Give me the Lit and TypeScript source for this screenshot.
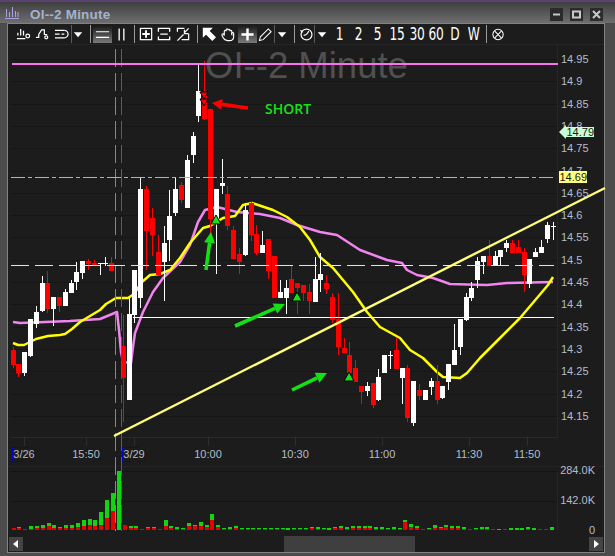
import { LitElement, html, svg, css } from "lit";
import { customElement } from "lit/decorators.js";

// x, wick top, body top, body bottom, wick bottom, 1 = white / 0 = red
const CANDLES: number[][] = [
  [13, 347, 350, 365, 368, 0], [18, 364, 364, 373, 377, 0], [24, 352, 352, 373, 376, 1], [30, 319, 319, 356, 357, 1],
  [36, 306, 312, 324, 328, 1], [42, 276, 283, 311, 312, 1], [47, 271, 283, 309, 313, 0], [53, 297, 297, 309, 326, 1],
  [59, 297, 297, 306, 312, 0], [65, 289, 292, 306, 306, 1], [71, 280, 283, 293, 293, 1], [76, 262, 272, 282, 290, 1],
  [82, 261, 261, 273, 279, 1], [88, 259, 261, 264, 270, 0], [94, 260, 263, 265, 266, 0], [100, 263, 263, 264, 275, 1],
  [105, 257, 263, 264, 266, 1], [111, 257, 263, 271, 271, 0], [123, 315, 346, 378, 422, 0], [129, 298, 314, 400, 400, 1],
  [134, 270, 270, 315, 323, 1], [140, 177, 189, 298, 308, 1], [146, 186, 189, 231, 270, 0], [152, 208, 218, 235, 256, 0],
  [158, 235, 252, 275, 276, 0], [164, 226, 243, 262, 301, 1], [169, 190, 216, 240, 261, 1], [175, 178, 189, 213, 216, 1],
  [181, 182, 185, 200, 203, 0], [187, 155, 160, 208, 208, 1], [193, 132, 136, 155, 163, 1], [198, 65, 91, 116, 122, 1],
  [204, 61, 92, 119, 120, 0], [210, 109, 109, 219, 240, 0], [216, 189, 189, 219, 274, 1], [222, 159, 183, 186, 194, 1],
  [227, 186, 194, 226, 230, 0], [233, 226, 230, 259, 259, 0], [239, 248, 254, 262, 274, 0], [245, 203, 210, 255, 256, 1],
  [251, 202, 203, 235, 241, 0], [256, 225, 234, 253, 255, 0], [262, 231, 245, 253, 253, 1], [268, 239, 239, 271, 279, 0],
  [274, 256, 256, 298, 298, 0], [280, 280, 292, 298, 298, 1], [286, 280, 288, 298, 314, 1], [291, 266, 279, 293, 293, 0],
  [297, 283, 283, 288, 314, 0], [303, 285, 285, 293, 301, 0], [309, 284, 292, 301, 314, 0], [315, 257, 279, 302, 302, 1],
  [320, 253, 274, 280, 292, 1], [326, 275, 283, 289, 294, 0], [332, 293, 297, 320, 323, 0], [338, 293, 319, 347, 355, 0],
  [344, 338, 348, 353, 353, 0], [349, 342, 355, 373, 373, 0], [355, 360, 368, 382, 382, 0], [361, 386, 386, 392, 404, 0],
  [367, 382, 386, 391, 396, 1], [373, 383, 383, 405, 408, 0], [378, 369, 377, 400, 401, 1], [384, 355, 355, 373, 373, 1],
  [390, 351, 355, 356, 369, 1], [396, 338, 350, 369, 369, 0], [402, 368, 368, 378, 404, 1], [407, 365, 368, 418, 422, 0],
  [413, 381, 381, 423, 426, 1], [419, 384, 390, 396, 400, 0], [425, 390, 390, 400, 400, 1], [431, 378, 381, 387, 395, 1],
  [437, 365, 381, 400, 404, 0], [442, 386, 386, 398, 399, 1], [448, 364, 364, 382, 390, 1], [454, 324, 350, 365, 365, 1],
  [460, 319, 319, 347, 355, 1], [466, 293, 297, 320, 321, 1], [471, 282, 288, 298, 301, 1], [477, 257, 261, 280, 288, 1],
  [483, 256, 256, 262, 274, 1], [489, 240, 256, 266, 266, 0], [495, 251, 256, 265, 265, 1], [500, 250, 250, 257, 265, 1],
  [506, 240, 243, 248, 252, 1], [512, 240, 243, 253, 253, 0], [518, 240, 247, 253, 253, 0], [524, 248, 252, 275, 292, 0],
  [529, 259, 259, 284, 288, 1], [535, 248, 252, 257, 257, 1], [541, 240, 247, 253, 253, 1], [547, 222, 225, 239, 243, 1],
  [553, 222, 226, 227, 240, 1],
];

// red part, green part, one pair per bar
const VOLUME: number[][] = [
  [2, 0], [2, 1], [1, 0], [1, 3], [2, 2], [2, 3], [4, 3], [2, 3], [2, 1], [2, 3], [2, 3], [3, 4], [4, 6], [5, 6], [4, 6],
  [5, 13], [12, 18], [19, 18], [0, 59], [5, 0], [2, 2], [2, 2], [1, 0], [2, 1], [2, 1], [1, 0], [4, 6], [2, 2], [1, 2],
  [1, 1], [4, 3], [4, 1], [4, 4], [3, 2], [10, 6], [3, 2], [1, 1], [1, 2], [2, 2], [1, 1], [1, 1], [1, 1], [1, 1], [1, 1],
  [1, 1], [1, 1], [1, 1], [0, 2], [1, 1], [1, 1], [1, 1], [2, 1], [1, 2], [1, 1], [0, 2], [2, 1], [2, 2], [1, 2], [2, 2],
  [2, 2], [2, 2], [2, 2], [1, 2], [1, 2], [1, 1], [1, 2], [1, 1], [8, 2], [3, 3], [2, 2], [1, 0], [1, 1], [2, 3], [2, 1],
  [3, 2], [2, 2], [2, 2], [1, 2], [1, 0], [1, 1], [1, 2], [1, 2], [1, 0], [0, 1], [1, 0], [0, 2], [0, 2], [0, 2], [1, 2],
  [0, 2], [1, 0], [1, 0], [0, 3],
];

const YELLOW = "13,343 18,345 24,345 30,342 36,339 48,336 60,335 65,334 72,329 80,322 90,316 100,310 106,304 116,298 128,298 134,294 142,282 150,275 160,274 170,270 180,258 190,243 203,228 210,226 223,218 235,216 243,205 252,203 273,210 287,217 300,227 310,240 320,257 333,268 353,292 367,312 380,327 400,338 410,350 423,358 437,372 443,377 460,378 467,373 480,358 500,338 520,318 537,298 548,285 553,277";
const PINK = "13,322 20,323 70,321 100,319 117,312 119,330 121,352 123,362 131,363 133,347 135,333 143,312 153,292 163,278 180,262 190,245 198,222 205,210 217,207 237,212 260,214 280,218 297,225 320,232 337,235 360,250 387,260 402,263 407,270 417,275 433,278 450,284 487,285 507,283 553,282";

const PRICES = ["14.95", "14.9", "14.85", "14.8", "14.75", "14.7", "14.65", "14.6", "14.55", "14.5", "14.45", "14.4", "14.35", "14.3", "14.25", "14.2", "14.15"];
const TIMES: [number, string][] = [[24, "3/26"], [86, "15:50"], [134, "3/29"], [208, "10:00"], [295, "10:30"], [382, "11:00"], [469, "11:30"], [527, "11:50"]];

const priceY = (i: number) => 59 + i * 22.3;

const ICONS: Record<string, unknown> = {
  bars: svg`<path d="M2 9V6M5 9V2M8 9V4M1 12.5H10" /><circle cx="12.5" cy="9.5" r="2" />`,
  step: svg`<path d="M1 11H4V8L7 3H10V8H13" /><circle cx="12" cy="11" r="1.6" />`,
  list: svg`<path d="M1 3.5H11M1 7.5H6M1 11.5H11M8 7.5H11" /><path d="M11 3.5A4 4 0 0 1 11 11.5" />`,
  plus: svg`<rect x="1.5" y="1.5" width="12" height="12" /><path d="M7.5 3.5V11.5M3.5 7.5H11.5" stroke-width="2" />`,
  minus: svg`<path d="M1.5 5V1.5H13.5V5M1.5 10V13.5H13.5V10M3.5 7.5H11.5" stroke-width="1.4" />`,
  fit: svg`<path d="M1.5 5V1.5H9M13.5 7V13.5H6M1.5 14.5L8 8M13.5 1.5L8.5 6.5M9 3V7H13" />`,
  arrow: svg`<path d="M1.5 1.5H10L7.2 4.3L14 11L11 14L4.3 7.2L1.5 10Z" fill="#fff" />`,
  hand: svg`<path d="M3.5 9V4.5A1 1 0 0 1 5.5 4.5V3A1 1 0 0 1 7.5 3V3.5A1 1 0 0 1 9.5 3.5V4.5A1 1 0 0 1 11.5 4.5V8A1 1 0 0 1 13.5 6.5V10C13.5 13 11.5 14.5 9 14.5H7C4.5 14.5 3 13 2 11L1 8.5A1 1 0 0 1 3 8Z" stroke-width="1.2" />`,
  cross: svg`<path d="M8 1.5V14.5M1.5 8H14.5" stroke-width="2.6" />`,
  pencil: svg`<path d="M1.5 14.5L2.5 10.5L11 2L14 5L5.5 13.5Z" stroke-width="1.1" />`,
  clock: svg`<circle cx="8" cy="8" r="5.8" /><path d="M1.5 3.5L4 5.5M8 8L10.5 4.5M8 8L5 9" />`,
  off: svg`<circle cx="7.5" cy="8" r="5.5" stroke-width="1.1" /><path d="M4 4.5L11 11.5M11 4.5L4 11.5" stroke-width="1.1" />`,
  drop: svg`<path d="M3 5.5H12L7.5 11Z" fill="#fff" stroke="none" />`,
  hline: svg`<path d="M1 5H15M1 11H15" stroke-width="1.2" />`,
  vline: svg`<path d="M5.5 1.5V14.5M10.5 1.5V14.5" stroke-width="1.4" />`,
};

const icon = (name: string) => html`<svg class="icon" viewBox="0 0 16 16">${ICONS[name]}</svg>`;

const arrow = (x1: number, y1: number, x2: number, y2: number, color: string, head = 11) => {
  const a = Math.atan2(y2 - y1, x2 - x1);
  const bx = x2 - Math.cos(a) * head;
  const by = y2 - Math.sin(a) * head;
  const nx = -Math.sin(a);
  const ny = Math.cos(a);
  return svg`
    <line x1=${x1} y1=${y1} x2=${bx} y2=${by} stroke=${color} stroke-width="3.6" />
    <polygon fill=${color} points="${x2},${y2} ${bx + nx * 5.5},${by + ny * 5.5} ${bx - nx * 5.5},${by - ny * 5.5}" />`;
};

const marker = (x: number, y: number) =>
  svg`<polygon fill="#14e014" stroke="#000" points="${x},${y - 5} ${x + 5},${y + 4} ${x - 5},${y + 4}" />`;

const dropMark = (x: number, y: number) =>
  svg`<polygon fill="#f00" stroke="#000" points="${x - 4},${y - 3} ${x + 4},${y - 3} ${x},${y + 4}" />`;

@customElement("app-root")
export class AppRoot extends LitElement {
  static styles = css`
    :host {
      display: flex;
      flex-direction: column;
      width: 615px;
      height: 556px;
      background: #4c4c4c;
      overflow: hidden;
      font-family: "Liberation Sans", Arial, sans-serif;
    }
    .title {
      flex: none;
      box-sizing: border-box;
      height: 23px;
      display: flex;
      align-items: center;
      gap: 7px;
      padding: 2px 12px 0 5px;
      border-top: 2px solid #5b4273;
      background: linear-gradient(#3f3f3f, #6e6e6e);
    }
    .title-icon {
      width: 14px;
      height: 13px;
      fill: none;
      stroke: #a9a2e0;
      margin: -3px 4px 0 0;
    }
    .title-text {
      font-size: 13.5px;
      font-weight: bold;
      color: #a3b3cc;
      flex: 1;
      margin-top: 2px;
      letter-spacing: 0.2px;
    }
    .winbtn {
      width: 13px;
      height: 13px;
      background: #2b2b2b;
      fill: none;
      stroke: #c9c9c9;
      stroke-width: 2;
      margin-top: 1px;
    }
    .panel {
      flex: none;
      box-sizing: border-box;
      height: 530px;
      margin: 0 10px 0 7px;
      border: 1px solid #828282;
      background: #1c1c1c;
      display: flex;
      flex-direction: column;
    }
    .toolbar {
      flex: none;
      height: 21px;
      box-sizing: border-box;
      padding-left: 6px;
      display: grid;
      grid-template-columns:
        18px 20px 19px 1px 13px 8px 19px 19px 6px 18px 19px 19px 8px 17px 20px 19px 16px 2px 14px 10px 14px 2px 15px
        19px 19px 19px 20px 19px 19px 19px 19px 9px 12px;
      align-items: center;
      justify-items: center;
      border-bottom: 1px solid #262626;
    }
    .tool {
      align-self: stretch;
      justify-self: stretch;
      display: flex;
      align-items: center;
      justify-content: center;
      overflow: hidden;
    }
    .tool.on {
      margin: 2px 0 1px;
      background: linear-gradient(#1c1c1c, #7a7a7a);
    }
    .icon {
      flex: none;
      width: 15px;
      height: 15px;
      fill: none;
      stroke: #fff;
      stroke-width: 1.3;
    }
    .sep {
      justify-self: start;
      width: 1px;
      height: 18px;
      background: #9a9a9a;
    }
    .sep.dim {
      background: #5a5a5a;
    }
    .sep.s1 {
      margin-left: 1px;
    }
    .sep.s3 {
      margin-left: 3px;
    }
    .sep.s4 {
      margin-left: 4px;
    }
    .sep.s5 {
      margin-left: 5px;
    }
    .num {
      color: #fff;
      font-family: "DejaVu Sans", sans-serif;
      font-size: 18px;
      font-weight: 400;
      line-height: 20px;
      transform: scaleX(0.68);
      white-space: nowrap;
      letter-spacing: -0.5px;
    }
    .chart {
      display: block;
      flex: none;
      width: 596px;
      height: 490px;
      overflow: visible;
    }
    .chart text {
      font-family: "Liberation Sans", Arial, sans-serif;
    }
    .axis {
      font-size: 11px;
      fill: #b4bccb;
    }
    .watermark {
      font-size: 36.5px;
      fill: #505050;
    }
    .tag {
      font-size: 11px;
      fill: #14210f;
    }
    .chart .short {
      font-family: "Open Sans", sans-serif;
      font-size: 14px;
      font-weight: 600;
      fill: #18e018;
    }
    .scroll {
      flex: 1;
      display: flex;
      align-items: stretch;
      justify-content: space-between;
      padding: 1px 0 0 1px;
      position: relative;
    }
    .scroll-btn {
      width: 14px;
      height: 14px;
      background: #444;
      display: flex;
      align-items: center;
      justify-content: center;
      margin: 1px 1px 1px 0;
    }
    .scroll-btn svg {
      width: 6px;
      height: 8px;
      fill: #fff;
    }
    .thumb {
      position: absolute;
      left: 276px;
      top: 1px;
      width: 131px;
      bottom: 0;
      background: #3f3f3f;
    }
  `;

  private tool(name: string, on = false) {
    return html`<div class="tool ${on ? "on" : ""}">${icon(name)}</div>`;
  }

  private chart() {
    return svg`
      <g shape-rendering="crispEdges">
        ${PRICES.map((_, i) => svg`<rect x="11" y=${Math.round(priceY(i))} width="547" height="1" fill="#161616" />`)}
        <rect x="557" y="45" width="1" height="392" fill="#262626" />
        <rect x="11" y="437" width="547" height="1" fill="#2a2a2a" />
        <rect x="8" y="466" width="596" height="1" fill="#242424" />
        <rect x="11" y="471" width="546" height="1" fill="#141414" />
        <rect x="11" y="501" width="546" height="1" fill="#141414" />
        <rect x="557" y="471" width="1" height="60" fill="#262626" />
        ${TIMES.map(([x]) => svg`<rect x=${x} y="437" width="1" height="9" fill="#2e2e2e" />`)}
      </g>
      <text class="watermark" x="306.5" y="78" text-anchor="middle">OI--2 Minute</text>

      <polyline points=${PINK} fill="none" stroke="#f284f0" stroke-width="2.5" stroke-linejoin="round" />
      <polyline points=${YELLOW} fill="none" stroke="#ffff00" stroke-width="2.5" stroke-linejoin="round" />

      <g shape-rendering="crispEdges">
        ${CANDLES.map(([x, wt, bt, bb, wb, up]) => {
          const c = up ? "#fff" : "#f00";
          return svg`<rect x=${x} y=${wt} width="1" height=${wb - wt} fill=${c} /><rect x=${x - 2} y=${bt} width="5" height=${Math.max(bb - bt, 1)} fill=${c} />`;
        })}
        <line x1="115.5" x2="115.5" y1="49" y2="531" stroke="#1eb4bb" stroke-dasharray="18 6" />
        <line x1="121.5" x2="121.5" y1="49" y2="531" stroke="#16797f" stroke-dasharray="18 6" />
        <rect x="12" y="63" width="546" height="2" fill="#fa72ee" />
        <line x1="11" x2="554" y1="177.5" y2="177.5" stroke="#ee88ee" stroke-dasharray="14 3 4 3" />
        <line x1="11" x2="554" y1="265.5" y2="265.5" stroke="#e2e2e2" stroke-dasharray="18 6" />
        <rect x="133" y="317" width="421" height="1" fill="#fff" />
      </g>

      <line x1="114" y1="436" x2="605" y2="188" stroke="#ffff78" stroke-width="2.4" />

      ${arrow(206, 270, 211, 232, "#14e014")}
      ${arrow(235, 326, 285, 304, "#14e014")}
      ${arrow(292, 390, 327, 373, "#14e014")}
      ${arrow(248, 108, 212, 103, "#f00", 10)}
      ${marker(216, 220)}
      ${marker(297, 297)}
      ${marker(349, 377)}
      ${dropMark(204, 95)}
      ${dropMark(204, 102)}
      <text class="short" x="265" y="114">SHORT</text>

      ${PRICES.map((p, i) => svg`<text class="axis" x="561" y=${priceY(i) + 4}>${p}</text>`)}
      <polygon fill="#c6ffd8" points="559,132 566,125 566,127 594,127 594,137 566,137 566,139" />
      <text class="tag" x="566.5" y="136">14.79</text>
      <rect x="559" y="171" width="28" height="12" fill="#ffff80" />
      <text class="tag" x="559.5" y="181">14.69</text>

      ${TIMES.map(([x, t]) => svg`<text class="axis" x=${x} y="458" text-anchor="middle">${t}</text>`)}
      <path d="M28.5 447.5H12.5V461.5H20M28 461.5H35.5V448" fill="none" stroke="#0000c8" shape-rendering="crispEdges" />
      <path d="M138.5 447.5H122.5V461.5H130M138 461.5H145.5V448" fill="none" stroke="#0000c8" shape-rendering="crispEdges" />

      <g shape-rendering="crispEdges">
        ${VOLUME.map(([r, g], i) => {
          const x = Math.round(11.5 + i * 5.85);
          return svg`<rect x=${x} y=${530 - r} width="4" height=${r} fill="#e60000" /><rect x=${x} y=${530 - r - g} width="4" height=${g} fill="#0fd60f" />`;
        })}
      </g>
      <text class="axis" x="595" y="474" text-anchor="end">284.0K</text>
      <text class="axis" x="595" y="504" text-anchor="end">142.0K</text>
      <text class="axis" x="595" y="533.5" text-anchor="end">0</text>
    `;
  }

  render() {
    return html`
      <div class="title">
        <svg class="title-icon" viewBox="0 0 14 13">
          <path d="M1.5 11V3M4.5 11V6M7.5 11V1M10.5 11V5M13 11V6M0 12.5H14" />
        </svg>
        <div class="title-text">OI--2 Minute</div>
        <svg class="winbtn" viewBox="0 0 13 13"><path d="M3 6.5H10" /></svg>
        <svg class="winbtn" viewBox="0 0 13 13"><rect x="3" y="3.5" width="7" height="6" /></svg>
        <svg class="winbtn" viewBox="0 0 13 13"><path d="M3 3L10 10M10 3L3 10" /></svg>
      </div>
      <div class="panel">
        <div class="toolbar">
          ${this.tool("bars")} ${this.tool("step")} ${this.tool("list")}
          <div class="sep dim"></div>
          ${this.tool("drop")}
          <div class="sep s5"></div>
          ${this.tool("hline", true)} ${this.tool("vline")}
          <div class="sep s3"></div>
          ${this.tool("plus")} ${this.tool("minus")} ${this.tool("fit")}
          <div class="sep s4"></div>
          ${this.tool("arrow")} ${this.tool("hand")} ${this.tool("cross", true)} ${this.tool("pencil")}
          <div class="sep dim s1"></div>
          ${this.tool("drop")}
          <div class="sep s5"></div>
          ${this.tool("clock")}
          <div class="sep dim s1"></div>
          ${this.tool("drop")}
          ${["1", "2", "5", "15", "30", "60", "D", "W"].map((n) => html`<div class="tool"><span class="num">${n}</span></div>`)}
          <div class="sep s3"></div>
          ${this.tool("off")}
        </div>
        <svg class="chart" viewBox="8 45 596 490">${this.chart()}</svg>
        <div class="scroll">
          <div class="scroll-btn"><svg viewBox="0 0 6 8"><path d="M5 0V8L0 4Z" /></svg></div>
          <div class="thumb"></div>
          <div class="scroll-btn"><svg viewBox="0 0 6 8"><path d="M1 0V8L6 4Z" /></svg></div>
        </div>
      </div>
    `;
  }
}
